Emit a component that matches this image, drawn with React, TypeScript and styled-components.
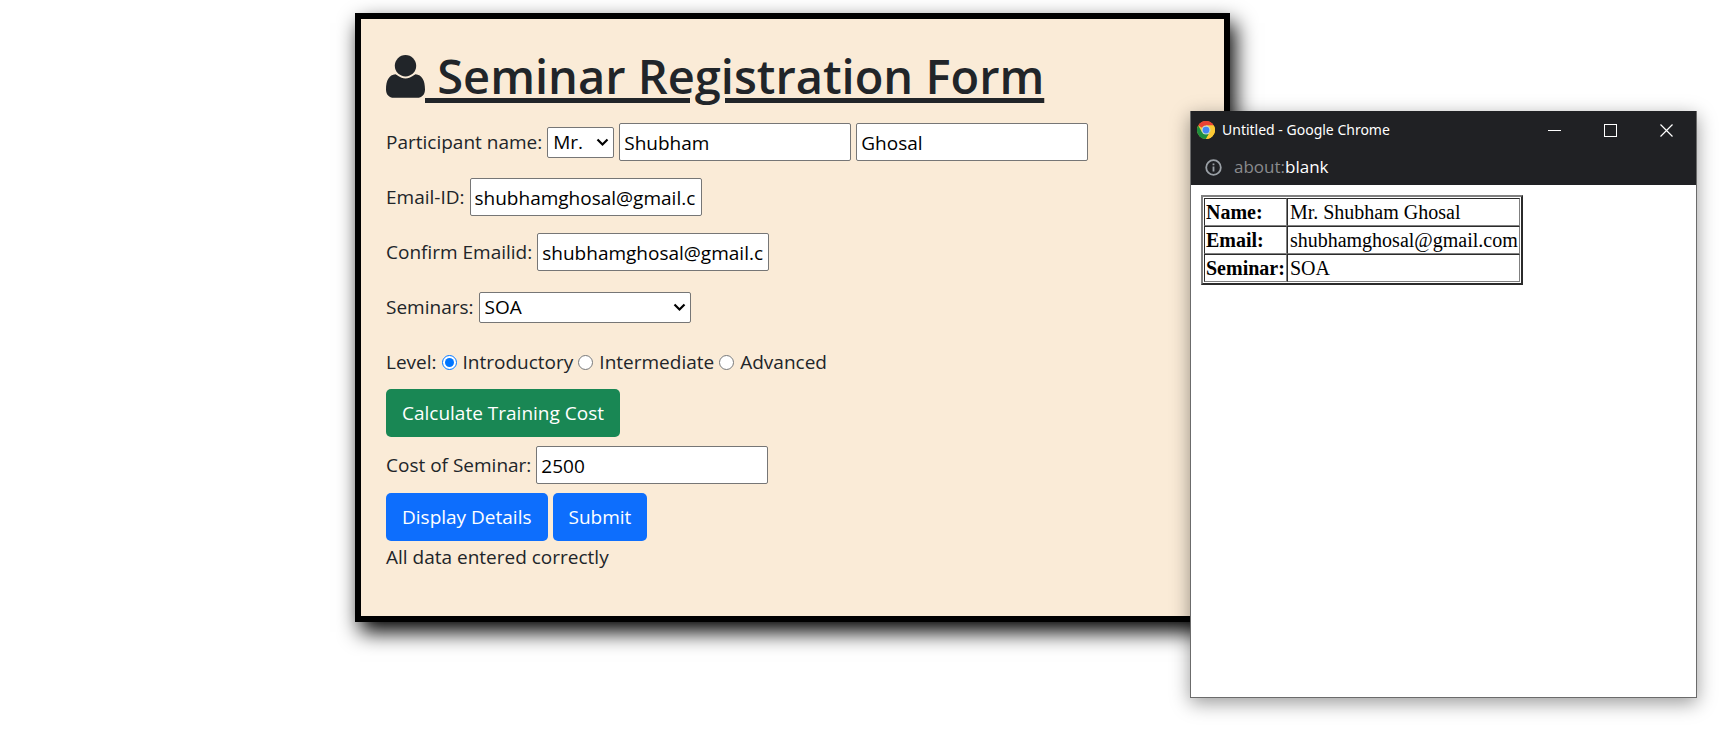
import { useState } from "react";
import styled, { createGlobalStyle } from "styled-components";

const ui = `"Open Sans", "Noto Sans", sans-serif`;

const GlobalStyle = createGlobalStyle`
  *, *::before, *::after { box-sizing: border-box; }
  body {
    margin: 0;
    background: #fff;
    color: #212529;
    font: 400 19px/30px ${ui};
  }
`;

const Page = styled.div`
  position: relative;
  min-height: 100vh;
  padding: 13px 0 0 355px;
`;

const Card = styled.main`
  width: 875px;
  max-width: 100%;
  padding: 27px 25px 44px;
  background: #faebd7;
  border: 6px solid #000;
  box-shadow: 5px 10px 20px 0 #000;
`;

const Title = styled.h1`
  display: flex;
  align-items: center;
  margin: 0 0 17px;
  font-size: 47px;
  line-height: 60px;
  font-weight: 600;
  white-space: pre;
`;

const TitleText = styled.span`
  text-decoration: underline;
  text-decoration-thickness: 5px;
  text-underline-offset: 4px;
`;

const Row = styled.div<{ $space: number }>`
  display: flex;
  align-items: center;
  gap: 5px;
  min-height: 38px;
  margin-bottom: ${(p) => p.$space}px;
`;

const TextInput = styled.input`
  width: 232px;
  height: 38px;
  padding: 2px 5px 0 4px;
  border: 1px solid #767676;
  border-radius: 2px;
  background: #fff;
  color: #000;
  font: inherit;
`;

const SelectBox = styled.span<{ $width: number }>`
  display: grid;
  align-items: center;
  width: ${(p) => p.$width}px;
  & > * { grid-area: 1 / 1; }
  & > svg { justify-self: end; margin-right: 5px; pointer-events: none; }
`;

const Select = styled.select`
  appearance: none;
  width: 100%;
  height: 31px;
  padding: 0 5px;
  border: 1px solid #767676;
  border-radius: 2px;
  background: #fff;
  color: #000;
  font: inherit;
  line-height: 29px;
`;

const Levels = styled.fieldset`
  margin: 0;
  padding: 0;
  border: 0;
`;

const Option = styled.label`
  display: flex;
  align-items: center;
  gap: 6px;
`;

const Radio = styled.input`
  width: 15px;
  height: 15px;
  margin: 0;
  accent-color: #0075ff;
`;

const Button = styled.button<{ $tone: string }>`
  height: 48px;
  padding: 0 16px;
  border: 0;
  border-radius: 5px;
  background: ${(p) => p.$tone};
  color: #fff;
  font: inherit;
`;

const Popup = styled.section`
  position: absolute;
  top: 111px;
  left: 1190px;
  width: 507px;
  height: 587px;
  background: #fff;
  border: 1px solid #6b6b6b;
  border-top: 0;
  box-shadow: 0 5px 18px rgba(0, 0, 0, 0.4);
`;

const TitleBar = styled.header`
  display: flex;
  align-items: center;
  height: 38px;
  padding: 0 2px 0 6px;
  gap: 7px;
  background: #202124;
  color: #fff;
  font: 400 14px/20px "Noto Sans", sans-serif;
`;

const Caption = styled.span`
  flex: 1;
`;

const WindowButton = styled.button`
  display: grid;
  place-items: center;
  width: 56px;
  height: 38px;
  padding: 0;
  border: 0;
  background: none;
`;

const WindowControls = styled.div`
  display: flex;
`;

const AddressBar = styled.div`
  display: flex;
  align-items: center;
  gap: 12px;
  height: 36px;
  padding-left: 14px;
  background: #202124;
  color: #fff;
  font-size: 17px;
  line-height: 24px;
`;

const Scheme = styled.span`
  color: #8a8b8d;
`;

const Details = styled.table`
  margin: 10px;
  padding: 1px;
  border: 2px solid;
  border-color: #808080 #2b2b2b #2b2b2b #808080;
  border-spacing: 0;
  color: #000;
  font: 20px/24px "Liberation Serif", serif;
  th, td {
    padding: 1px;
    border: 1px solid;
    border-color: #2b2b2b #808080 #808080 #2b2b2b;
    text-align: left;
  }
  td { padding-left: 2px; }
`;

const UserIcon = () => (
  <svg width="39" height="43" viewBox="0 0 39 43" fill="#212529" aria-hidden="true">
    <circle cx="19.5" cy="10.7" r="10.7" />
    <path d="M9.5 19.3C3 19.8 0 25.500 0 34.500C0 39.700 3.200 42.800 7.800 42.800H31.200C35.800 42.800 39 39.700 39 34.500C39 25.500 36 19.800 29.500 19.300C28.500 19.300 25.300 23.400 19.500 23.400S10.500 19.300 9.500 19.300Z" />
  </svg>
);

const Chevron = () => (
  <svg width="13" height="9" viewBox="0 0 13 9" aria-hidden="true">
    <path d="M1.500 1.500L6.500 6.500L11.500 1.500" fill="none" stroke="#000" strokeWidth="2.200" />
  </svg>
);

const ChromeIcon = () => (
  <svg width="18" height="18" viewBox="0 0 48 48" aria-hidden="true">
    <circle cx="24" cy="24" r="24" fill="#fcc934" />
    <path d="M24 24L3.200 12A24 24 0 0 1 44.800 12H24Z" fill="#ea4335" />
    <path d="M3.200 12A24 24 0 0 0 24 48L34.400 30L24 24L13.600 30Z" fill="#1e8e3e" />
    <path d="M24 12H44.800A24 24 0 0 1 24 48L34.400 30Z" fill="#fcc934" />
    <circle cx="24" cy="24" r="12" fill="#c9dcc9" />
    <circle cx="24" cy="24" r="9" fill="#4285f4" />
  </svg>
);

const InfoIcon = () => (
  <svg width="17" height="17" viewBox="0 0 17 17" aria-hidden="true">
    <circle cx="8.500" cy="8.500" r="7.300" fill="none" stroke="#9aa0a6" strokeWidth="1.800" />
    <path d="M8.500 7.500V12.500M8.500 4.500V6.200" stroke="#9aa0a6" strokeWidth="1.800" />
  </svg>
);

export default function App() {
  const [level, setLevel] = useState("Introductory");
  return (
    <Page>
      <GlobalStyle />
      <Card>
        <Title>
          <UserIcon />
          <TitleText> Seminar Registration Form</TitleText>
        </Title>
        <Row $space={17}>
          <label htmlFor="salutation">Participant name:</label>
          <SelectBox $width={67}>
            <Select id="salutation">
              <option>Mr.</option>
              <option>Ms.</option>
            </Select>
            <Chevron />
          </SelectBox>
          <TextInput aria-label="First name" defaultValue="Shubham" />
          <TextInput aria-label="Last name" defaultValue="Ghosal" />
        </Row>
        <Row $space={17}>
          <label htmlFor="email">Email-ID:</label>
          <TextInput id="email" defaultValue="shubhamghosal@gmail.com" />
        </Row>
        <Row $space={17}>
          <label htmlFor="confirm">Confirm Emailid:</label>
          <TextInput id="confirm" defaultValue="shubhamghosal@gmail.com" />
        </Row>
        <Row $space={17}>
          <label htmlFor="seminar">Seminars:</label>
          <SelectBox $width={212}>
            <Select id="seminar">
              <option>SOA</option>
            </Select>
            <Chevron />
          </SelectBox>
        </Row>
        <Levels aria-label="Level">
          <Row $space={8}>
            <span>Level:</span>
            {["Introductory", "Intermediate", "Advanced"].map((name) => (
              <Option key={name}>
                <Radio type="radio" name="level" checked={level === name} onChange={() => setLevel(name)} />
                {name}
              </Option>
            ))}
          </Row>
        </Levels>
        <Row $space={9}>
          <Button type="button" $tone="#198754">Calculate Training Cost</Button>
        </Row>
        <Row $space={9}>
          <label htmlFor="cost">Cost of Seminar:</label>
          <TextInput id="cost" defaultValue="2500" />
        </Row>
        <Row $space={1}>
          <Button type="button" $tone="#0d6efd">Display Details</Button>
          <Button type="button" $tone="#0d6efd">Submit</Button>
        </Row>
        <div role="status">All data entered correctly</div>
      </Card>
      <Popup aria-label="Untitled - Google Chrome">
        <TitleBar>
          <ChromeIcon />
          <Caption>Untitled - Google Chrome</Caption>
          <WindowControls>
            <WindowButton aria-label="Minimize">
              <svg width="13" height="13"><path d="M0 6.500H13" stroke="#fff" /></svg>
            </WindowButton>
            <WindowButton aria-label="Maximize">
              <svg width="13" height="13"><rect x="0.500" y="0.500" width="12" height="12" fill="none" stroke="#fff" /></svg>
            </WindowButton>
            <WindowButton aria-label="Close">
              <svg width="13" height="13"><path d="M0.500 0.500L12.500 12.500M12.500 0.500L0.500 12.500" stroke="#fff" strokeWidth="1.200" /></svg>
            </WindowButton>
          </WindowControls>
        </TitleBar>
        <AddressBar>
          <InfoIcon />
          <span><Scheme>about:</Scheme>blank</span>
        </AddressBar>
        <Details>
          <tbody>
            <tr><th scope="row">Name:</th><td>Mr. Shubham Ghosal</td></tr>
            <tr><th scope="row">Email:</th><td>shubhamghosal@gmail.com</td></tr>
            <tr><th scope="row">Seminar:</th><td>SOA</td></tr>
          </tbody>
        </Details>
      </Popup>
    </Page>
  );
}
